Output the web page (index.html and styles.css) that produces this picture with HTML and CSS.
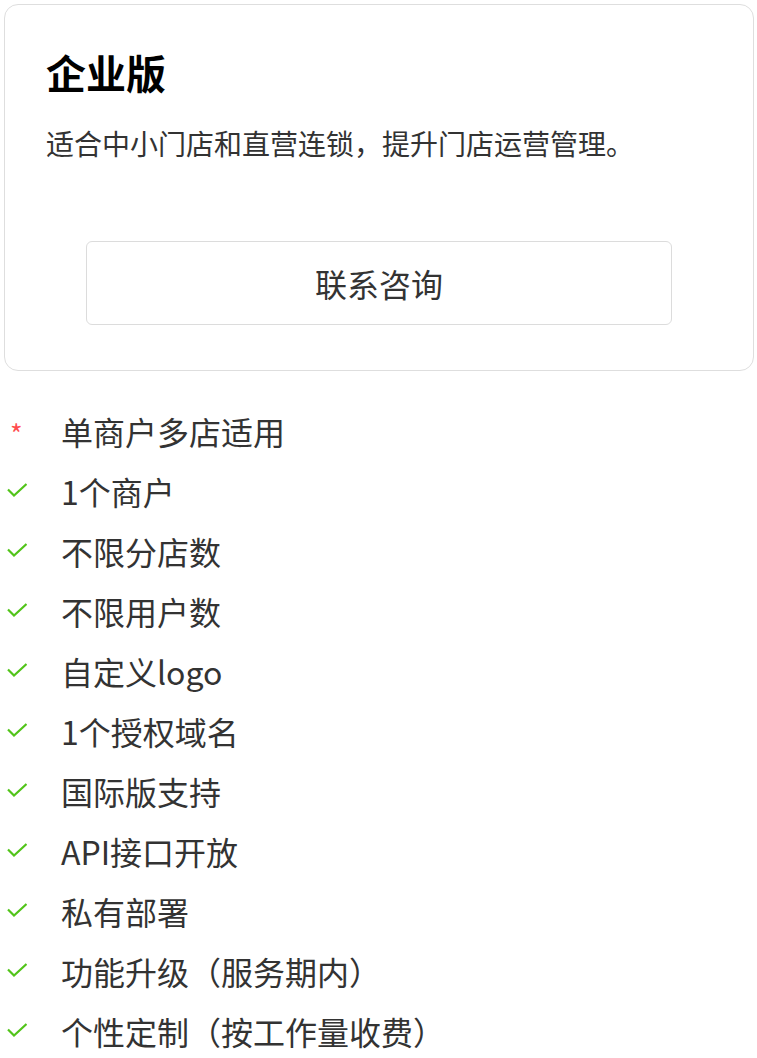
FILE: index.html
```html
<!DOCTYPE html>
<html lang="zh-CN">
<head>
<meta charset="utf-8">
<title>企业版</title>
<link rel="stylesheet" href="styles.css">
</head>
<body>
<div class="card">
  <h2 class="card-title">企业版</h2>
  <p class="card-desc">适合中小门店和直营连锁，提升门店运营管理。</p>
  <button class="card-btn" type="button">联系咨询</button>
</div>
<ul class="features">
  <li class="feature"><span class="mark"><span class="star">*</span></span><span class="label">单商户多店适用</span></li>
  <li class="feature"><span class="mark"><svg class="check" viewBox="0 0 20 14"><path d="M1 6.5 L7 12.5 L19.5 1" fill="none" stroke="#52c41a" stroke-width="2.2"/></svg></span><span class="label">1个商户</span></li>
  <li class="feature"><span class="mark"><svg class="check" viewBox="0 0 20 14"><path d="M1 6.5 L7 12.5 L19.5 1" fill="none" stroke="#52c41a" stroke-width="2.2"/></svg></span><span class="label">不限分店数</span></li>
  <li class="feature"><span class="mark"><svg class="check" viewBox="0 0 20 14"><path d="M1 6.5 L7 12.5 L19.5 1" fill="none" stroke="#52c41a" stroke-width="2.2"/></svg></span><span class="label">不限用户数</span></li>
  <li class="feature"><span class="mark"><svg class="check" viewBox="0 0 20 14"><path d="M1 6.5 L7 12.5 L19.5 1" fill="none" stroke="#52c41a" stroke-width="2.2"/></svg></span><span class="label">自定义logo</span></li>
  <li class="feature"><span class="mark"><svg class="check" viewBox="0 0 20 14"><path d="M1 6.5 L7 12.5 L19.5 1" fill="none" stroke="#52c41a" stroke-width="2.2"/></svg></span><span class="label">1个授权域名</span></li>
  <li class="feature"><span class="mark"><svg class="check" viewBox="0 0 20 14"><path d="M1 6.5 L7 12.5 L19.5 1" fill="none" stroke="#52c41a" stroke-width="2.2"/></svg></span><span class="label">国际版支持</span></li>
  <li class="feature"><span class="mark"><svg class="check" viewBox="0 0 20 14"><path d="M1 6.5 L7 12.5 L19.5 1" fill="none" stroke="#52c41a" stroke-width="2.2"/></svg></span><span class="label">API接口开放</span></li>
  <li class="feature"><span class="mark"><svg class="check" viewBox="0 0 20 14"><path d="M1 6.5 L7 12.5 L19.5 1" fill="none" stroke="#52c41a" stroke-width="2.2"/></svg></span><span class="label">私有部署</span></li>
  <li class="feature"><span class="mark"><svg class="check" viewBox="0 0 20 14"><path d="M1 6.5 L7 12.5 L19.5 1" fill="none" stroke="#52c41a" stroke-width="2.2"/></svg></span><span class="label">功能升级（服务期内）</span></li>
  <li class="feature"><span class="mark"><svg class="check" viewBox="0 0 20 14"><path d="M1 6.5 L7 12.5 L19.5 1" fill="none" stroke="#52c41a" stroke-width="2.2"/></svg></span><span class="label">个性定制（按工作量收费）</span></li>
</ul>
</body>
</html>
```

FILE: styles.css
```css
* {
  box-sizing: border-box;
}

body {
  margin: 0;
  background: #fff;
  color: #333;
  font-family: "Noto Sans CJK SC", "Noto Sans", sans-serif;
}

.card {
  margin: 4px 3px 0 4px;
  border: 1px solid #dedede;
  border-radius: 14px;
  padding: 47px 41px 45px 41px;
  display: flex;
  flex-direction: column;
}

.card-title {
  margin: 0;
  font-size: 40px;
  line-height: 1;
  font-weight: 700;
  color: #000;
}

.card-desc {
  margin: 37px 0 0 0;
  font-size: 28px;
  line-height: 1;
  color: #333;
}

.card-btn {
  margin: 84px 40px 0 40px;
  height: 84px;
  border: 1px solid #dcdcdc;
  border-radius: 6px;
  background: #fff;
  font-family: inherit;
  font-size: 32px;
  color: #333;
  padding: 0;
}

.features {
  list-style: none;
  margin: 30px 0 0 0;
  padding: 0;
}

.feature {
  display: flex;
  align-items: center;
  height: 60px;
  font-size: 32px;
  line-height: 60px;
}

.mark {
  width: 61px;
  flex: none;
  display: flex;
  align-items: center;
  padding-left: 7px;
}

.check {
  width: 20px;
  height: 14px;
  display: block;
  margin-bottom: 3px;
}

.star {
  display: block;
  color: #ff4d4f;
  font-size: 27px;
  line-height: 26px;
  margin-left: 3px;
  margin-top: 6px;
}

.label {
  color: #333;
}
```
